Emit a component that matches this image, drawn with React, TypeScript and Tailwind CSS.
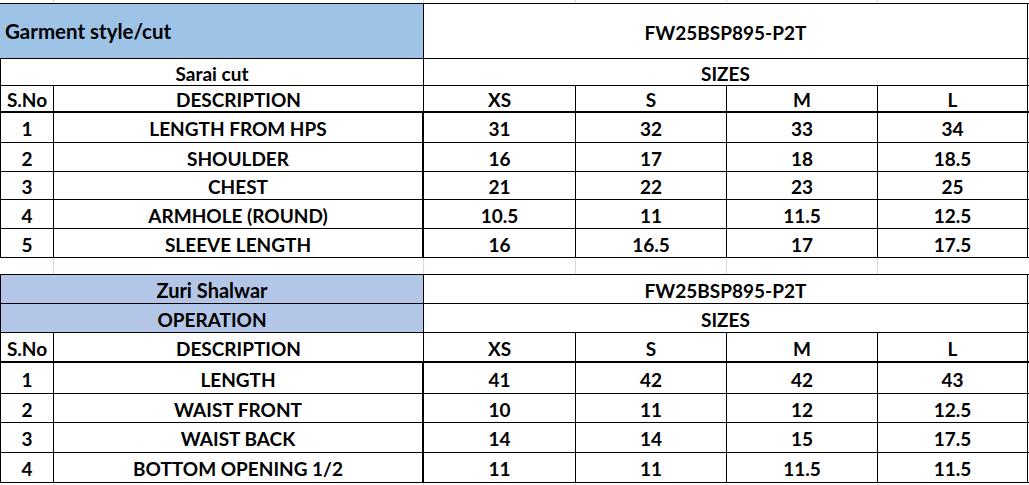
import { FunctionComponent, ReactNode } from "react";

const grid = "border-[#d9d9d9]";

const top = [
  ["1", "LENGTH FROM HPS", "31", "32", "33", "34"],
  ["2", "SHOULDER", "16", "17", "18", "18.5"],
  ["3", "CHEST", "21", "22", "23", "25"],
  ["4", "ARMHOLE (ROUND)", "10.5", "11", "11.5", "12.5"],
  ["5", "SLEEVE LENGTH", "16", "16.5", "17", "17.5"],
];
const topHeights = ["h-[30px]", "h-[29px]", "h-[28px]", "h-[29px]", "h-[29px]"];

const bottom = [
  ["1", "LENGTH", "41", "42", "42", "43"],
  ["2", "WAIST FRONT", "10", "11", "12", "12.5"],
  ["3", "WAIST BACK", "14", "14", "15", "17.5"],
  ["4", "BOTTOM OPENING 1/2", "11", "11", "11.5", "11.5"],
];
const bottomHeights = ["h-[31px]", "h-[29px]", "h-[30px]", "h-[30px]"];

const Cell = ({ className, children }: { className: string; children?: ReactNode }) => (
  <div className={`flex h-full items-center justify-center pt-[2px] ${className}`}>{children}</div>
);

const GridStrip = ({ h }: { h: string }) => (
  <div className={`flex ${h}`}>
    <div className={`w-[54px] border-r ${grid}`} />
    <div className={`w-[370px] border-r ${grid}`} />
    <div className={`w-[152px] border-r ${grid}`} />
    <div className={`w-[151px] border-r ${grid}`} />
    <div className={`w-[151px] border-r ${grid}`} />
    <div className="w-[150px]" />
  </div>
);

const SizeRow = ({ cells, h, head }: { cells: string[]; h: string; head?: boolean }) => (
  <div className={`flex ${h} border-black ${head ? "border-b-2" : "border-b"}`}>
    <Cell className="w-[54px] border-x border-black">{cells[0]}</Cell>
    <Cell className={`w-[370px] border-black ${head ? "border-r" : "border-r-2"}`}>{cells[1]}</Cell>
    <Cell className="w-[152px] border-r border-black">{cells[2]}</Cell>
    <Cell className="w-[151px] border-r border-black">{cells[3]}</Cell>
    <Cell className="w-[151px] border-r border-black">{cells[4]}</Cell>
    <Cell className="w-[150px] border-r border-black">{cells[5]}</Cell>
  </div>
);

const SplitRow = ({ left, right, h, blue, edge, size }: { left: string; right: string; h: string; blue?: boolean; edge?: string; size?: string }) => (
  <div className={`flex ${h} border-b border-black ${edge ?? ""}`}>
    <Cell className={`w-[424px] border-x border-black ${blue ? "bg-[#b4c6e7]" : ""} ${size ?? ""}`}>{left}</Cell>
    <Cell className="w-[604px] border-r border-black">{right}</Cell>
  </div>
);

const App: FunctionComponent = () => {
  return (
    <div className="w-[1029px] h-[485px] overflow-hidden bg-white text-black font-bold text-[19px] leading-none [font-family:Lato,'Liberation_Sans',sans-serif]">
      <GridStrip h="h-[3px]" />

      <div className="flex h-[56px] border-y border-black">
        <div className="flex w-[424px] items-center border-r border-black bg-[#9dc3e6] pl-[5px] pt-[1px] text-[20.5px]">
          Garment style/cut
        </div>
        <Cell className="w-[604px] border-r border-black">FW25BSP895-P2T</Cell>
      </div>
      <SplitRow left="Sarai cut" right="SIZES" h="h-[27px]" />
      <SizeRow cells={["S.No", "DESCRIPTION", "XS", "S", "M", "L"]} h="h-[27px]" head />
      {top.map((r, i) => (
        <SizeRow key={i} cells={r} h={topHeights[i]} />
      ))}

      <GridStrip h="h-[16px]" />

      <SplitRow left="Zuri Shalwar" right="FW25BSP895-P2T" h="h-[30px]" blue edge="border-t" size="text-[20px]" />
      <SplitRow left="OPERATION" right="SIZES" h="h-[29px]" blue />
      <SizeRow cells={["S.No", "DESCRIPTION", "XS", "S", "M", "L"]} h="h-[30px]" head />
      {bottom.map((r, i) => (
        <SizeRow key={i} cells={r} h={bottomHeights[i]} />
      ))}

      <GridStrip h="h-[3px]" />
    </div>
  );
};

export default App;
